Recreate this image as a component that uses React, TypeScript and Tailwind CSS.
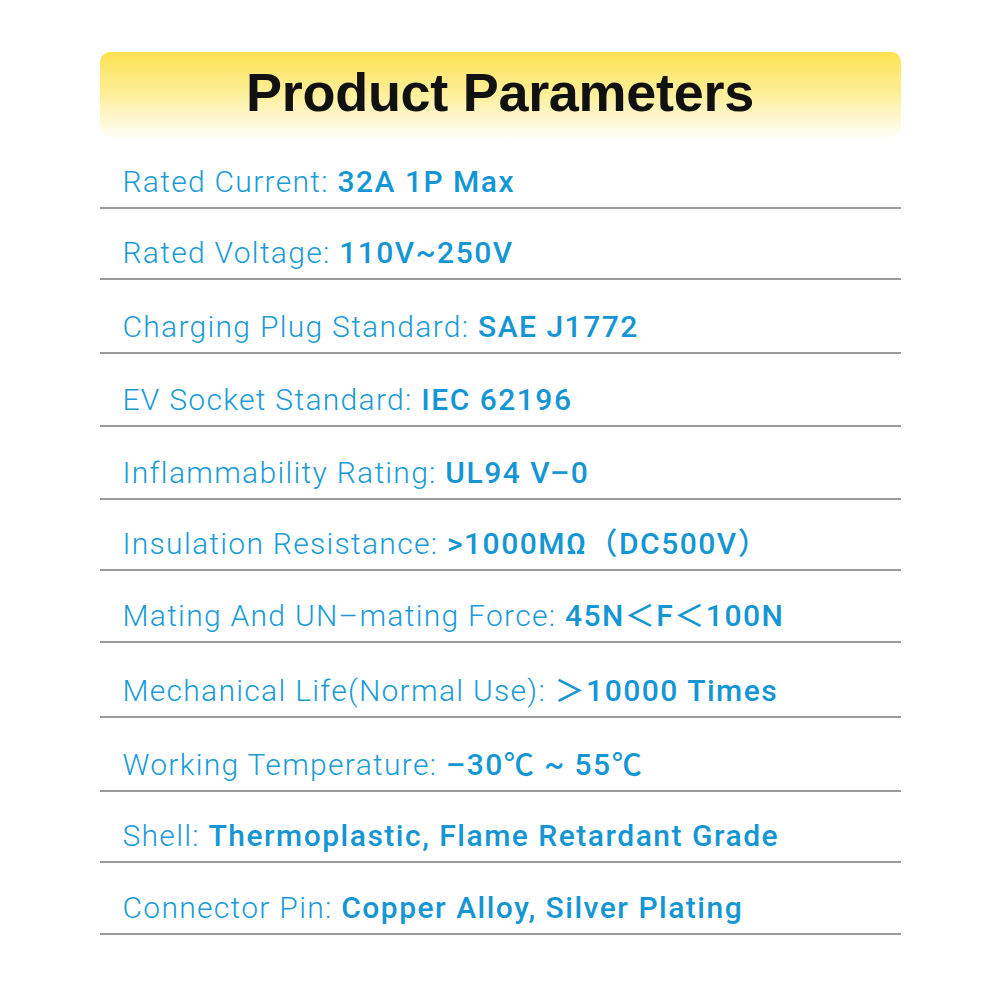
import React from "react";

const rows: { label: string; value: string; h: string }[] = [
  { label: "Rated Current: ", value: "32A 1P Max", h: "h-[72px]" },
  { label: "Rated Voltage: ", value: "110V~250V", h: "h-[71px]" },
  { label: "Charging Plug Standard: ", value: "SAE J1772", h: "h-[74px]" },
  { label: "EV Socket Standard: ", value: "IEC 62196", h: "h-[73px]" },
  { label: "Inflammability Rating: ", value: "UL94 V–0", h: "h-[73px]" },
  { label: "Insulation Resistance: ", value: ">1000MΩ（DC500V）", h: "h-[71px]" },
  { label: "Mating And UN–mating Force: ", value: "45N＜F＜100N", h: "h-[72px]" },
  { label: "Mechanical Life(Normal Use): ", value: "＞10000 Times", h: "h-[75px]" },
  { label: "Working Temperature: ", value: "–30℃ ~ 55℃", h: "h-[74px]" },
  { label: "Shell: ", value: "Thermoplastic, Flame Retardant Grade", h: "h-[71px]" },
  { label: "Connector Pin: ", value: "Copper Alloy, Silver Plating", h: "h-[72px]" },
];

export default function App() {
  return (
    <div className="w-[1000px] h-[1000px] bg-white flex flex-col items-center pt-[52px]">
      <div className="w-[801px] flex flex-col">
        <div className="h-[85px] rounded-[10px] bg-gradient-to-b from-[#fde14a] via-[#feef9a] to-[#fffdf5] flex items-center justify-center pb-[6px]">
          <h1
            className="text-[54px] font-bold text-[#111] tracking-[-0.3px] leading-none"
            style={{ fontFamily: '"Liberation Sans", Arial, sans-serif' }}
          >
            Product Parameters
          </h1>
        </div>
        {rows.map((r) => (
          <div key={r.label} className={`${r.h} border-b-2 border-[#9a9a9a] flex items-end pb-[10px] pl-[23px]`}>
            <span
              className="text-[30px] leading-none text-[#1a9bd7] whitespace-pre tracking-[1.3px]"
              style={{ fontFamily: 'Roboto, "Noto Sans CJK SC", sans-serif' }}
            >
              <span className="font-light">{r.label}</span>
              <span className="font-medium text-[#1596d4] tracking-[1.5px]">{r.value}</span>
            </span>
          </div>
        ))}
      </div>
    </div>
  );
}
